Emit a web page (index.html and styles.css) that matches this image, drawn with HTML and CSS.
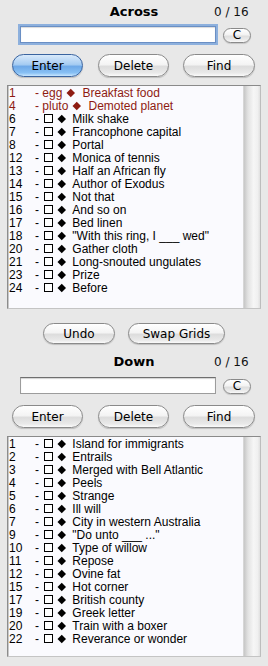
FILE: index.html
```html
<!DOCTYPE html>
<html>
<head>
<meta charset="utf-8">
<link rel="stylesheet" href="styles.css">
</head>
<body>
<div class="pane">
  <div class="head"><span class="title">Across</span><span class="count">0 / 16</span></div>
  <div class="entry"><div class="field focus"></div><button class="cbtn">C</button></div>
  <div class="actions"><button class="btn default w71">Enter</button><button class="btn w71 g15">Delete</button><button class="btn w72 g14">Find</button></div>
  <div class="list across">
    <div class="rows">
      <div class="row done"><span class="num">1</span>- egg <span class="dia solved"></span>Breakfast food</div>
      <div class="row done"><span class="num">4</span>- pluto <span class="dia solved"></span>Demoted planet</div>
      <div class="row"><span class="num">6</span>- <span class="box"></span><span class="dia"></span>Milk shake</div>
      <div class="row"><span class="num">7</span>- <span class="box"></span><span class="dia"></span>Francophone capital</div>
      <div class="row"><span class="num">8</span>- <span class="box"></span><span class="dia"></span>Portal</div>
      <div class="row"><span class="num">12</span>- <span class="box"></span><span class="dia"></span>Monica of tennis</div>
      <div class="row"><span class="num">13</span>- <span class="box"></span><span class="dia"></span>Half an African fly</div>
      <div class="row"><span class="num">14</span>- <span class="box"></span><span class="dia"></span>Author of Exodus</div>
      <div class="row"><span class="num">15</span>- <span class="box"></span><span class="dia"></span>Not that</div>
      <div class="row"><span class="num">16</span>- <span class="box"></span><span class="dia"></span>And so on</div>
      <div class="row"><span class="num">17</span>- <span class="box"></span><span class="dia"></span>Bed linen</div>
      <div class="row"><span class="num">18</span>- <span class="box"></span><span class="dia"></span>"With this ring, I ___ wed"</div>
      <div class="row"><span class="num">20</span>- <span class="box"></span><span class="dia"></span>Gather cloth</div>
      <div class="row"><span class="num">21</span>- <span class="box"></span><span class="dia"></span>Long-snouted ungulates</div>
      <div class="row"><span class="num">23</span>- <span class="box"></span><span class="dia"></span>Prize</div>
      <div class="row"><span class="num">24</span>- <span class="box"></span><span class="dia"></span>Before</div>
    </div>
    <div class="track"></div>
  </div>
  <div class="tools"><button class="btn w72">Undo</button><button class="btn w97 g13">Swap Grids</button></div>
</div>
<div class="pane">
  <div class="head down"><span class="title">Down</span><span class="count">0 / 16</span></div>
  <div class="entry"><div class="field"></div><button class="cbtn">C</button></div>
  <div class="actions"><button class="btn w71">Enter</button><button class="btn w71 g15">Delete</button><button class="btn w72 g14">Find</button></div>
  <div class="list downlist">
    <div class="rows">
      <div class="row"><span class="num">1</span>- <span class="box"></span><span class="dia"></span>Island for immigrants</div>
      <div class="row"><span class="num">2</span>- <span class="box"></span><span class="dia"></span>Entrails</div>
      <div class="row"><span class="num">3</span>- <span class="box"></span><span class="dia"></span>Merged with Bell Atlantic</div>
      <div class="row"><span class="num">4</span>- <span class="box"></span><span class="dia"></span>Peels</div>
      <div class="row"><span class="num">5</span>- <span class="box"></span><span class="dia"></span>Strange</div>
      <div class="row"><span class="num">6</span>- <span class="box"></span><span class="dia"></span>Ill will</div>
      <div class="row"><span class="num">7</span>- <span class="box"></span><span class="dia"></span>City in western Australia</div>
      <div class="row"><span class="num">9</span>- <span class="box"></span><span class="dia"></span>"Do unto ___ ..."</div>
      <div class="row"><span class="num">10</span>- <span class="box"></span><span class="dia"></span>Type of willow</div>
      <div class="row"><span class="num">11</span>- <span class="box"></span><span class="dia"></span>Repose</div>
      <div class="row"><span class="num">12</span>- <span class="box"></span><span class="dia"></span>Ovine fat</div>
      <div class="row"><span class="num">15</span>- <span class="box"></span><span class="dia"></span>Hot corner</div>
      <div class="row"><span class="num">17</span>- <span class="box"></span><span class="dia"></span>British county</div>
      <div class="row"><span class="num">19</span>- <span class="box"></span><span class="dia"></span>Greek letter</div>
      <div class="row"><span class="num">20</span>- <span class="box"></span><span class="dia"></span>Train with a boxer</div>
      <div class="row"><span class="num">22</span>- <span class="box"></span><span class="dia"></span>Reverance or wonder</div>
    </div>
    <div class="track"></div>
  </div>
</div>
</body>
</html>
```
FILE: styles.css
```css
html, body {
  margin: 0;
  padding: 0;
  background: #e8e8e8;
  width: 268px;
  height: 666px;
  overflow: hidden;
}
.pane {
  display: flex;
  flex-direction: column;
}
.head {
  display: grid;
  grid-template-columns: 214px 1fr;
  padding-top: 4px;
  height: 16px;
  line-height: 16px;
  font-family: "DejaVu Sans", sans-serif;
}
.head.down {
  padding-top: 10px;
}
.title {
  grid-area: 1 / 1 / 2 / 3;
  text-align: center;
  font-weight: bold;
  font-size: 13px;
  color: #000;
}
.count {
  grid-area: 1 / 2 / 2 / 3;
  font-size: 12px;
  color: #111;
}
.entry {
  display: flex;
  align-items: center;
  padding-left: 20px;
  margin-top: 6px;
  height: 17px;
}
.down + .entry {
  margin-top: 7px;
}
.field {
  width: 194px;
  height: 15px;
  background: #fff;
  border: 1px solid #9c9c9c;
  border-top-color: #6f6f6f;
  box-shadow: inset 0 1px 1px rgba(0,0,0,0.18);
}
.field.focus {
  border-color: #6a8fc4;
  box-shadow: 0 0 0 2px #8db0dd, inset 0 1px 1px rgba(0,0,0,0.15);
}
.cbtn {
  margin-left: 7px;
  margin-top: 1px;
  width: 28px;
  height: 15px;
  padding: 0;
  border: 1px solid #8a8a8a;
  border-radius: 8px;
  background: linear-gradient(#ffffff, #f3f3f3 45%, #dedede 55%, #ececec 85%, #fafafa);
  font-family: "DejaVu Sans", sans-serif;
  font-size: 12px;
  line-height: 13px;
  color: #000;
  box-shadow: 0 1px 1px rgba(0,0,0,0.15);
}
.actions {
  display: flex;
  padding-left: 12px;
  margin-top: 11px;
  height: 23px;
}
.tools {
  display: flex;
  padding-left: 43px;
  margin-top: 14px;
  height: 21px;
}
.btn {
  height: 100%;
  padding: 0;
  border: 1px solid #8a8a8a;
  border-radius: 12px;
  background: linear-gradient(#ffffff, #f4f4f4 45%, #dddddd 55%, #e9e9e9 85%, #fbfbfb);
  font-family: "DejaVu Sans", sans-serif;
  font-size: 12px;
  color: #000;
  box-shadow: 0 1px 1px rgba(0,0,0,0.18);
}
.btn.default {
  border-color: #3a64a0;
  background: linear-gradient(#d9eafb, #a6ccf2 45%, #6ea9e8 55%, #88c0f4 85%, #c8e6ff);
}
.w71 { width: 71px; }
.w72 { width: 72px; }
.w97 { width: 97px; }
.g15 { margin-left: 15px; }
.g14 { margin-left: 14px; }
.g13 { margin-left: 13px; }
.list {
  display: grid;
  grid-template-columns: 1fr 17px;
  margin: 8px 7px 0 7px;
  background: #fafafe;
  border: 1px solid #a6a6a6;
  border-top-color: #8a8a8a;
  border-left-color: #8c8c8c;
  border-bottom-color: #c4c4c4;
  border-right-color: #bdbdbd;
}
.list.across { height: 222px; }
.list.downlist { height: 219px; }
.rows {
  padding: 1px 0 0 1px;
  font-family: "Liberation Sans", Arial, sans-serif;
  font-size: 12px;
  line-height: 13px;
  color: #000;
  white-space: nowrap;
  overflow: hidden;
  box-shadow: inset 1px 0 0 #c8c8c8;
}
.row {
  height: 13px;
}
.row.done {
  color: #8e1b12;
}
.num {
  display: inline-block;
  width: 26px;
}
.box {
  display: inline-block;
  width: 7px;
  height: 7px;
  border: 1px solid #000;
  background: #fff;
  margin: 0 5.5px 0 2px;
  vertical-align: 0;
}
.dia {
  display: inline-block;
  width: 5.5px;
  height: 5.5px;
  background: #000;
  transform: rotate(45deg);
  margin: 0 8px 0 0;
  vertical-align: 1.5px;
}
.dia.solved {
  background: #8e1b12;
  margin: 0 8.5px 0 2.8px;
}
.track {
  background: linear-gradient(90deg, #c6c6c6, #e2e2e2 25%, #f6f6f6 60%, #f0f0f0 85%, #e0e0e0);
  border-left: 1px solid #d6d6d6;
}
```
